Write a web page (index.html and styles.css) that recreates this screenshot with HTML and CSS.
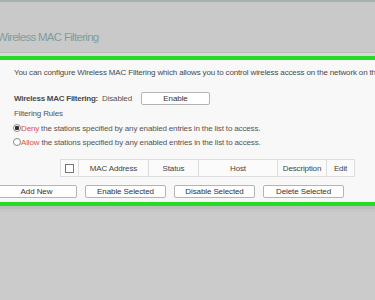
FILE: index.html
```html
<!DOCTYPE html>
<html lang="en">
<head>
<meta charset="utf-8"/>
<meta content="width=device-width, initial-scale=1" name="viewport"/>
<title>Wireless MAC Filtering</title>
<link rel="stylesheet" href="styles.css">
</head>
<body>
<div class="topline"></div>
<header class="page-head">
  <h1>Wireless MAC Filtering</h1>
</header>
<div class="head-rule"></div>
<div class="green-rule"></div>
<main class="panel">
  <p class="intro">You can configure Wireless MAC Filtering which allows you to control wireless access on the network on this device.</p>
  <div class="status-row">
    <span class="label">Wireless MAC Filtering:</span>
    <span class="value">Disabled</span>
    <button class="btn btn-enable" type="button">Enable</button>
  </div>
  <div class="rules-title">Filtering Rules</div>
  <label class="rule"><input type="radio" name="rule" checked/><span class="kw">Deny</span> the stations specified by any enabled entries in the list to access.</label>
  <label class="rule"><input type="radio" name="rule"/><span class="kw">Allow</span> the stations specified by any enabled entries in the list to access.</label>
  <table class="mac-table">
    <tr>
      <th class="c-check"><span class="box"></span></th>
      <th class="c-mac">MAC Address</th>
      <th class="c-status">Status</th>
      <th class="c-host">Host</th>
      <th class="c-desc">Description</th>
      <th class="c-edit">Edit</th>
    </tr>
  </table>
  <div class="actions">
    <button class="btn" type="button">Add New</button>
    <button class="btn" type="button">Enable Selected</button>
    <button class="btn" type="button">Disable Selected</button>
    <button class="btn" type="button">Delete Selected</button>
  </div>
</main>
<div class="green-rule"></div>
<div class="foot-rule"></div>
</body>
</html>
```

FILE: styles.css
```css
body {
  margin: 0;
  padding: 0;
  background-color: #cbcbcb;
  font-family: 'Liberation Sans', Arial, sans-serif;
  color: #444;
  overflow: hidden;
}
.topline {
  height: 2px;
  background-color: #a2b3b1;
}
.page-head {
  height: 50px;
  background-color: #c9c9c9;
  overflow: hidden;
}
.page-head h1 {
  margin: 0 0 0 -3px;
  padding-top: 28px;
  font-size: 11.5px;
  font-weight: normal;
  line-height: 14px;
  letter-spacing: -0.7px;
  color: #7f9d9d;
  white-space: nowrap;
}
.head-rule {
  height: 1px;
  border-top: 1px solid #bcbcbc;
  background-color: #d9d9d9;
  padding-bottom: 2px;
}
.green-rule {
  height: 4px;
  background-color: #25dc25;
}
.panel {
  background-color: #f8f8f8;
  height: 142px;
  padding: 0 0 0 14px;
  font-size: 8px;
  letter-spacing: -0.15px;
  overflow: hidden;
}
.intro {
  margin: 0;
  padding-top: 7px;
  line-height: 12px;
  white-space: nowrap;
  color: #4a4a4a;
}
.status-row {
  display: flex;
  align-items: center;
  margin-top: 13px;
  height: 13px;
  white-space: nowrap;
}
.label {
  font-weight: bold;
  color: #4a4a4a;
  width: 88px;
  flex: none;
  letter-spacing: -0.25px;
}
.value {
  width: 39px;
  flex: none;
  color: #555;
}
.btn {
  font-family: inherit;
  font-size: 8px;
  letter-spacing: -0.1px;
  color: #333;
  background-color: #fff;
  border: 1px solid #b4b4b4;
  border-radius: 2px;
  height: 13px;
  padding: 0;
  line-height: 11px;
  white-space: nowrap;
}
.btn-enable {
  width: 69px;
  flex: none;
}
.rules-title {
  margin-top: 2px;
  line-height: 14px;
  color: #555;
}
.rule {
  display: flex;
  align-items: center;
  height: 14px;
  white-space: nowrap;
  color: #555;
}
.rule input {
  appearance: none;
  width: 8px;
  height: 8px;
  margin: 0 0 0 -1px;
  border: 1px solid #8a8a8a;
  border-radius: 50%;
  background-color: #fff;
  box-sizing: border-box;
  flex: none;
}
.rule input:checked {
  background: radial-gradient(circle, #333 0 2px, #fff 2.5px);
}
.kw {
  color: #d9534f;
  margin-right: 2px;
}
.mac-table {
  margin: 10px 0 0 46px;
  width: 288px;
  border-collapse: collapse;
  table-layout: fixed;
}
.mac-table th {
  height: 16px;
  padding: 0;
  border: 1px solid #dedede;
  font-weight: normal;
  color: #444;
  text-align: center;
  background-color: #fbfbfb;
  white-space: nowrap;
}
.c-check { width: 17px; }
.c-mac { width: 69px; }
.c-status { width: 49px; }
.c-host { width: 78px; }
.c-desc { width: 48px; }
.c-edit { width: 27px; }
.box {
  display: inline-block;
  width: 7px;
  height: 7px;
  border: 1px solid #777;
  background-color: #fff;
  vertical-align: middle;
}
.actions {
  display: flex;
  gap: 8px;
  margin: 8px 0 0 -18px;
}
.actions .btn {
  width: 81px;
  flex: none;
}
.foot-rule {
  height: 3px;
  background-color: #bdbdbd;
  border-bottom: 3px solid #c6c6c6;
}
```
